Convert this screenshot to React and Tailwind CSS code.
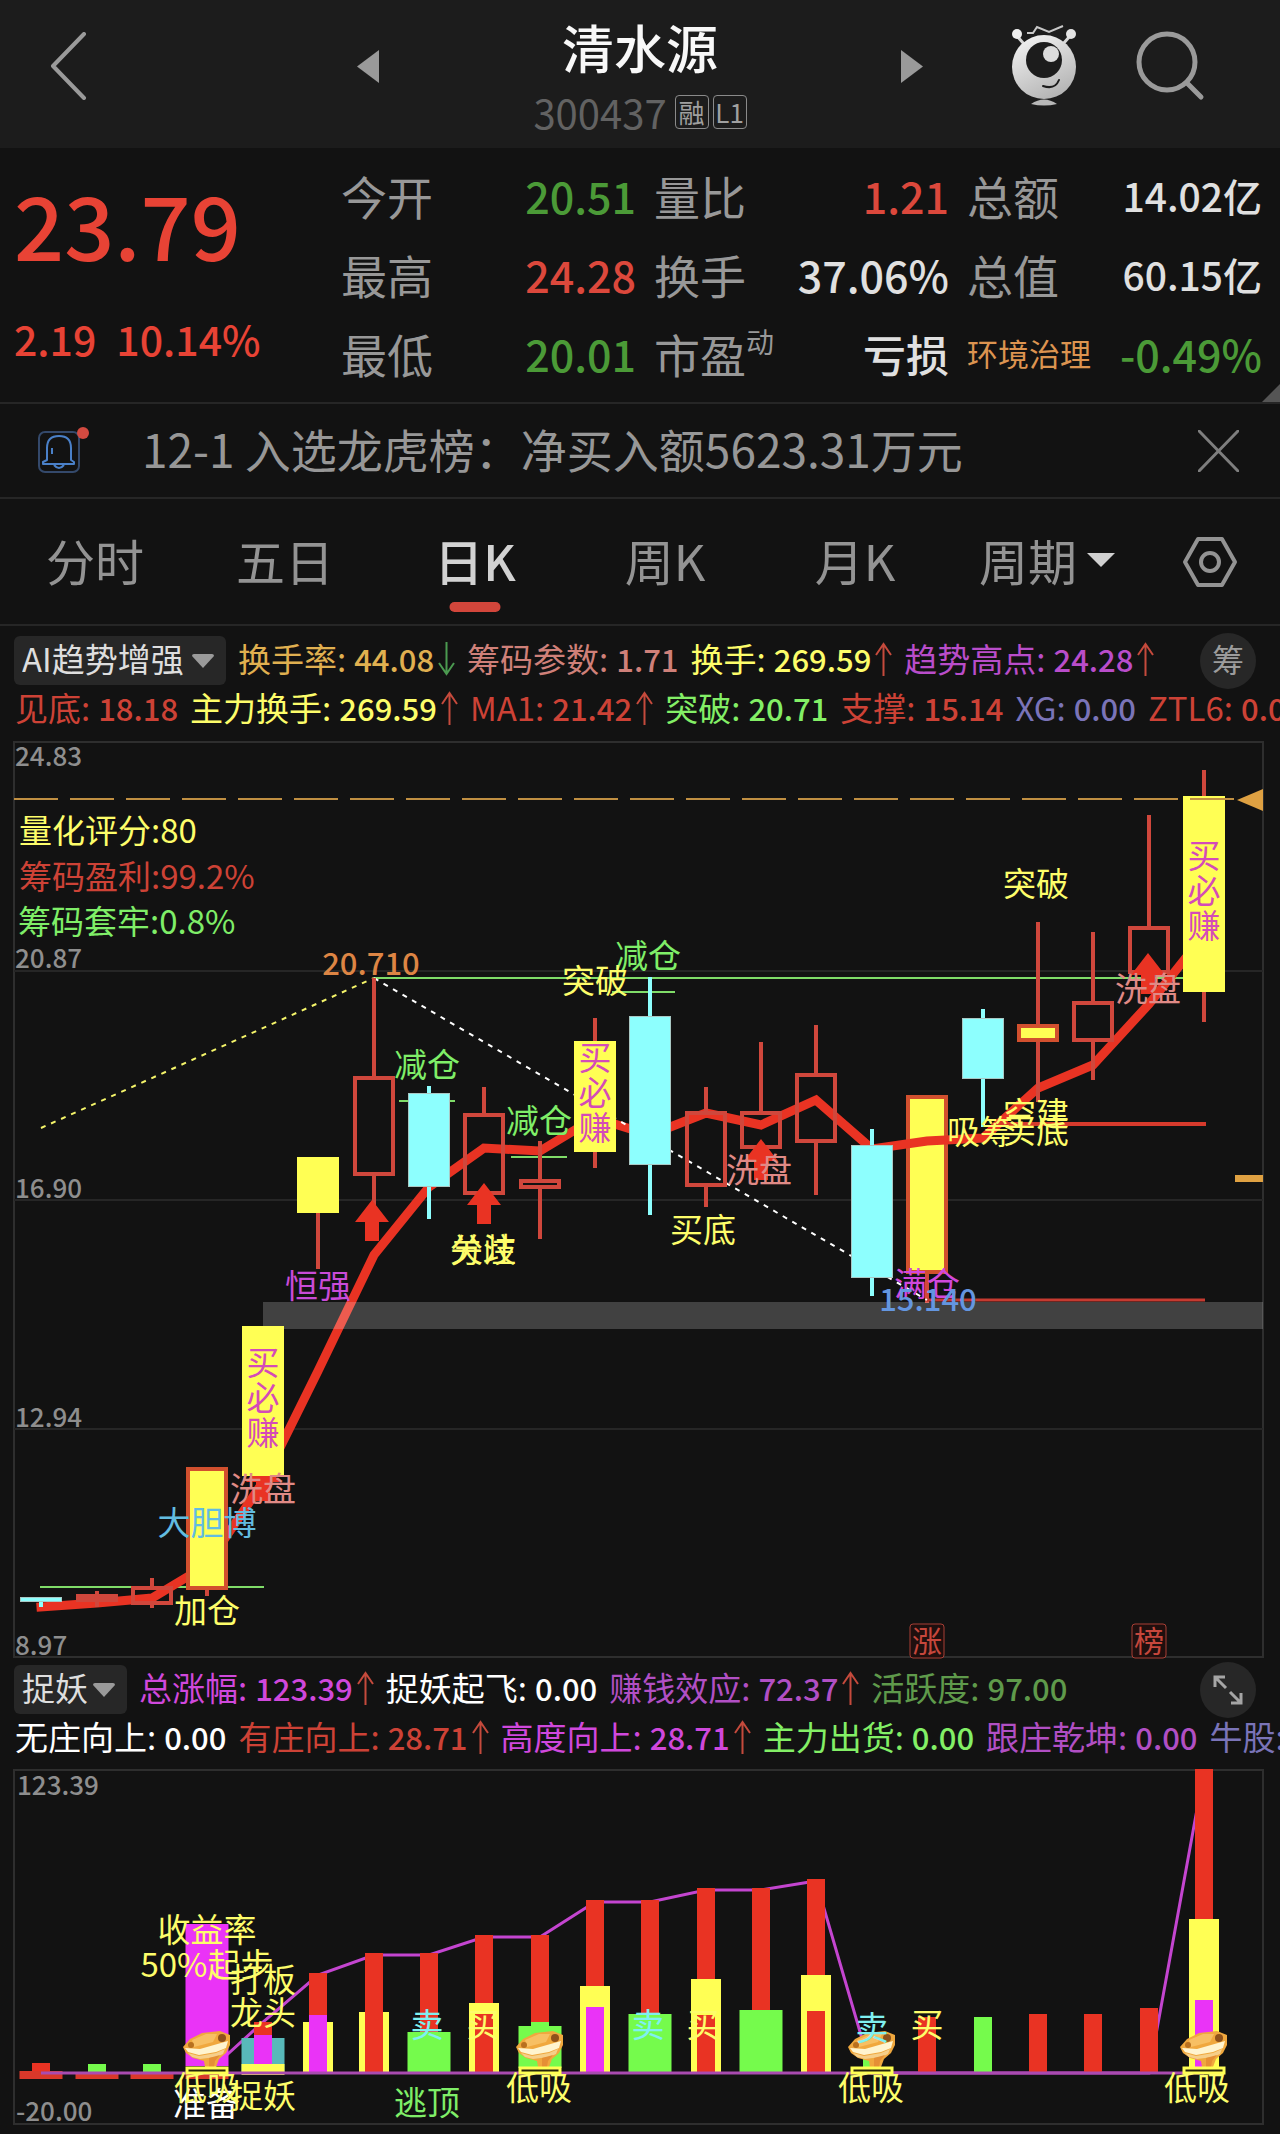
import React, { useState } from "react";

const QUOTES = [
  { label: "今开", value: "20.51", color: "text-[#4b9a37]" },
  { label: "量比", value: "1.21", color: "text-[#dc483c]" },
  { label: "总额", value: "14.02亿", color: "text-[#e0e0e0]", small: true },
  { label: "最高", value: "24.28", color: "text-[#dc483c]" },
  { label: "换手", value: "37.06%", color: "text-[#e0e0e0]" },
  { label: "总值", value: "60.15亿", color: "text-[#e0e0e0]", small: true },
  { label: "最低", value: "20.01", color: "text-[#4b9a37]" },
  { label: "市盈", sup: "动", value: "亏损", color: "text-[#e0e0e0]" },
  { label: "环境治理", sector: true, value: "-0.49%", color: "text-[#4b9a37]" },
];

const TABS = ["分时", "五日", "日K", "周K", "月K"];

const TREND_ROW_1 = [
  { name: "换手率", value: "44.08", dir: "down", color: "text-[#e0b050]" },
  { name: "筹码参数", value: "1.71", color: "text-[#cf8079]" },
  { name: "换手", value: "269.59", dir: "up", color: "text-[#fdfd6a]" },
  { name: "趋势高点", value: "24.28", dir: "up", color: "text-[#b94dca]" },
];

const TREND_ROW_2 = [
  { name: "见底", value: "18.18", color: "text-[#cd4236]" },
  { name: "主力换手", value: "269.59", dir: "up", color: "text-[#fdfd6a]" },
  { name: "MA1", value: "21.42", dir: "up", color: "text-[#cd4236]" },
  { name: "突破", value: "20.71", color: "text-[#83ef66]" },
  { name: "支撑", value: "15.14", color: "text-[#cd4236]" },
  { name: "XG", value: "0.00", color: "text-[#7a74b8]" },
  { name: "ZTL6", value: "0.00", color: "text-[#cd4236]" },
];

const CATCH_ROW_1 = [
  { name: "总涨幅", value: "123.39", dir: "up", color: "text-[#d048dc]" },
  { name: "捉妖起飞", value: "0.00", color: "text-white" },
  { name: "赚钱效应", value: "72.37", dir: "up", color: "text-[#b14fc4]" },
  { name: "活跃度", value: "97.00", color: "text-[#5f9a4b]" },
];

const CATCH_ROW_2 = [
  { name: "无庄向上", value: "0.00", color: "text-white" },
  { name: "有庄向上", value: "28.71", dir: "up", color: "text-[#cd4236]" },
  { name: "高度向上", value: "28.71", dir: "up", color: "text-[#d048dc]" },
  { name: "主力出货", value: "0.00", color: "text-[#83ef66]" },
  { name: "跟庄乾坤", value: "0.00", color: "text-[#b14fc4]" },
  { name: "牛股", value: "0.00", color: "text-[#7a74b8]" },
];

// x of the centre of the candle for day i
const dayX = (i) => Math.round(41.4 + i * 55.36);

// [day, type, high, bodyTop, bodyBottom, low] in chart coordinates
const CANDLES = [
  [0, "fall", 1597, 1597, 1602, 1607],
  [1, "rise", 1591, 1594, 1602, 1607],
  [2, "rise", 1578, 1586, 1605, 1608],
  [3, "limit", 1467, 1467, 1590, 1596],
  [4, "signal", 1326, 1326, 1476, 1476],
  [5, "signal", 1157, 1157, 1213, 1269],
  [6, "rise", 978, 1076, 1176, 1225],
  [7, "fall", 1086, 1093, 1187, 1219],
  [8, "rise", 1087, 1113, 1195, 1215],
  [9, "rise", 1141, 1179, 1189, 1239],
  [10, "signal", 1018, 1041, 1152, 1168],
  [11, "fall", 977, 1016, 1165, 1215],
  [12, "rise", 1087, 1111, 1187, 1207],
  [13, "rise", 1042, 1111, 1149, 1160],
  [14, "rise", 1025, 1073, 1143, 1195],
  [15, "fall", 1129, 1145, 1278, 1296],
  [17, "fall", 1009, 1018, 1079, 1127],
  [18, "limit", 922, 1024, 1042, 1102],
  [19, "rise", 932, 1001, 1042, 1080],
  [20, "rise", 815, 926, 974, 985],
  [21, "signal", 770, 796, 992, 1022],
];

const MA = [
  1607, 1603, 1598, 1565, 1482, 1371, 1255, 1187, 1148, 1151, 1118, 1135, 1113,
  1125, 1100, 1149, 1141, 1138, 1088, 1065, 1004, 935,
];

const YELLOW = "#fdfd6a";
const GREEN = "#7fee68";
const SALMON = "#e08a86";

const MARKS = [
  [427, 1065, "减仓", GREEN],
  [539, 1121, "减仓", GREEN],
  [648, 956, "减仓", GREEN],
  [595, 981, "突破", YELLOW],
  [1036, 884, "突破", YELLOW],
  [759, 1170, "洗盘", SALMON],
  [1148, 989, "洗盘", SALMON],
  [263, 1489, "洗盘", SALMON],
  [207, 1523, "大胆博", "#62bce0"],
  [207, 1611, "加仓", YELLOW],
  [318, 1286, "恒强", "#c94bd8"],
  [483, 1250, "分歧", YELLOW],
  [483, 1250, "关注", YELLOW],
  [703, 1230, "买底", YELLOW],
  [927, 1284, "满仓", "#d048dc"],
  [980, 1132, "吸筹", YELLOW],
  [1036, 1114, "空建", YELLOW],
  [1036, 1131, "买底", YELLOW],
];

const RED = "#e93323";
const PURE_YELLOW = "#ffff54";
const LIME = "#75fb4c";
const MAGENTA = "#ea33f7";

// [day, width, top, bottom, color]
const BARS = [
  [0, 18, 2063, 2073, RED],
  [0, 43, 2071, 2079, "#d9382a"],
  [1, 18, 2064, 2073, LIME],
  [1, 43, 2072, 2079, "#d9382a"],
  [2, 18, 2064, 2073, LIME],
  [2, 43, 2072, 2079, "#d9382a"],
  [3, 43, 1924, 2066, MAGENTA],
  [3, 43, 2072, 2079, "#d9382a"],
  [4, 43, 2038, 2073, "#58b9ba"],
  [4, 18, 2022, 2035, RED],
  [4, 18, 2035, 2064, MAGENTA],
  [4, 43, 2064, 2075, PURE_YELLOW],
  [5, 30, 2022, 2074, PURE_YELLOW],
  [5, 18, 1973, 2015, RED],
  [5, 18, 2015, 2074, MAGENTA],
  [6, 30, 2012, 2074, PURE_YELLOW],
  [6, 18, 1953, 2074, RED],
  [7, 18, 1953, 2032, RED],
  [7, 43, 2032, 2074, LIME],
  [8, 18, 1935, 2003, RED],
  [8, 30, 2003, 2074, PURE_YELLOW],
  [8, 18, 2014, 2074, RED],
  [9, 18, 1935, 2022, RED],
  [9, 18, 2022, 2074, LIME],
  [9, 43, 2026, 2068, LIME],
  [10, 18, 1900, 1986, RED],
  [10, 30, 1986, 2074, PURE_YELLOW],
  [10, 18, 2007, 2074, MAGENTA],
  [11, 18, 1900, 2014, RED],
  [11, 43, 2014, 2074, LIME],
  [12, 18, 1888, 1979, RED],
  [12, 30, 1979, 2074, PURE_YELLOW],
  [12, 18, 2015, 2074, RED],
  [13, 18, 1888, 2010, RED],
  [13, 43, 2010, 2074, LIME],
  [14, 18, 1879, 1975, RED],
  [14, 30, 1975, 2074, PURE_YELLOW],
  [14, 18, 2011, 2074, RED],
  [15, 18, 2055, 2074, LIME],
  [16, 18, 2017, 2074, RED],
  [17, 18, 2017, 2074, LIME],
  [18, 18, 2014, 2074, RED],
  [19, 18, 2014, 2074, RED],
  [20, 18, 2008, 2074, RED],
  [21, 18, 1769, 1919, RED],
  [21, 30, 1919, 2074, PURE_YELLOW],
  [21, 18, 2000, 2074, MAGENTA],
];

const GAIN = [
  2073, 2022, 1975, 1955, 1955, 1937, 1937, 1902, 1902, 1890, 1890, 1881, 2073,
  2073, 2073, 2073, 2073, 2073, 1771,
];

const CATCH_MARKS = [
  [207, 1930, "收益率", YELLOW],
  [207, 1965, "50%起步", YELLOW],
  [263, 1980, "打板", YELLOW],
  [263, 2013, "龙头", YELLOW],
  [206, 2104, "准备", "#ffffff"],
  [207, 2088, "低吸", YELLOW],
  [263, 2096, "捉妖", YELLOW],
  [427, 2025, "卖", "#7ff0f0"],
  [483, 2025, "买", YELLOW],
  [427, 2103, "逃顶", GREEN],
  [539, 2088, "低吸", YELLOW],
  [648, 2025, "卖", "#7ff0f0"],
  [703, 2025, "买", YELLOW],
  [872, 2028, "卖", "#7ff0f0"],
  [927, 2025, "买", YELLOW],
  [871, 2088, "低吸", YELLOW],
  [1197, 2088, "低吸", YELLOW],
];

const Mark = ({ x, y, color, children }) => (
  <text x={x} y={y + 12} fill={color} textAnchor="middle" fontSize="33">
    {children}
  </text>
);

const AxisLabel = ({ x = 15, y, children }) => (
  <text x={x} y={y + 10} fill="#8e8e8e" fontSize="26" fontWeight="500">
    {children}
  </text>
);

const Candle = ({ day, type, high, top, bottom, low }) => {
  const x = dayX(day);
  const wick = type === "fall" ? "#8dfffe" : "#d0473c";
  const styles = {
    fall: { fill: "#8dfffe", stroke: "#a9c8c4", strokeWidth: 1 },
    rise: { fill: "none", stroke: "#d0473c", strokeWidth: 4 },
    limit: { fill: "#ffff54", stroke: "#d2502e", strokeWidth: 4 },
    signal: { fill: "#ffff54", stroke: "none", strokeWidth: 0 },
  };
  const s = styles[type];
  const inset = s.strokeWidth / 2;
  return (
    <g>
      <path
        d={`M${x} ${high}V${top}M${x} ${bottom}V${low}`}
        stroke={wick}
        strokeWidth="4"
      />
      <rect
        x={x - 21 + inset}
        y={top + inset}
        width={42 - s.strokeWidth}
        height={bottom - top - s.strokeWidth}
        {...s}
      />
    </g>
  );
};

const BuyArrow = ({ x, y }) => (
  <path
    d={`M${x} ${y}L${x + 17} ${y + 22}H${x + 7}V${y + 41}H${x - 7}V${y + 22}H${x - 17}Z`}
    fill="#e93323"
  />
);

const BuyColumn = ({ x, y }) =>
  ["买", "必", "赚"].map((c, i) => (
    <Mark key={c} x={x} y={y + i * 35} color="#d44bb8">
      {c}
    </Mark>
  ));

const DayTag = ({ x, children }) => (
  <g>
    <rect
      x={x - 17}
      y="1624"
      width="34"
      height="34"
      rx="3"
      fill="#1f0f0e"
      stroke="#a83f35"
      strokeWidth="1"
    />
    <text x={x} y="1652" fill="#c6473c" textAnchor="middle" fontSize="30">
      {children}
    </text>
  </g>
);

const Ingot = ({ day }) => (
  <g transform={`translate(${dayX(day) - 25} 2031)`}>
    <path
      d="M1 16L8 8L20 2L38 0L48 4V14L44 22L37 28L34 36H23L22 30L11 27L4 22Z"
      fill="#f0a83e"
    />
    <path d="M10 9L24 3L35 3L31 11L12 16Z" fill="#f7bf63" />
    <path d="M3 17L18 18L46 10L44 17L34 21L17 24L6 21Z" fill="#fff4cf" />
    <path d="M6 22L17 25L34 22L43 18L41 23L34 26L18 28L10 26Z" fill="#f6cf8a" />
    <path d="M27 27L38 24L33 30L32 36H27Z" fill="#e58f35" />
    <circle cx="40" cy="7" r="4" fill="#8f521b" />
    <circle cx="9" cy="14" r="3" fill="#b8701f" />
    <rect
      x="5"
      y="37"
      width="40"
      height="5"
      fill="#26230c"
      stroke="#ffff54"
      strokeWidth="3"
    />
  </g>
);

const KlineChart = () => (
  <svg
    viewBox="0 734 1280 931"
    className="block w-full"
    role="img"
    aria-label="日K线图"
  >
    <rect
      x="14"
      y="742"
      width="1249"
      height="915"
      fill="none"
      stroke="#2e2e2e"
      strokeWidth="2"
    />
    <path
      d="M14 971H1263M14 1200H1263M14 1429H1263"
      stroke="#262626"
      strokeWidth="2"
    />
    <AxisLabel y={756}>24.83</AxisLabel>
    <AxisLabel y={958}>20.87</AxisLabel>
    <AxisLabel y={1188}>16.90</AxisLabel>
    <AxisLabel y={1417}>12.94</AxisLabel>
    <AxisLabel y={1645}>8.97</AxisLabel>

    <g fontSize="33">
      <text x="19" y="843" fill="#fdfd6a">
        量化评分:80
      </text>
      <text x="19" y="889" fill="#cd4236">
        筹码盈利:99.2%
      </text>
      <text x="18" y="934" fill="#7fee68">
        筹码套牢:0.8%
      </text>
    </g>

    <path
      d="M374 978H1190M40 1587H264M399 1101H455M511 1157H567M612 992H675"
      stroke="#7fdc68"
      strokeWidth="2"
    />
    <Candle day={16} type="limit" high={1095} top={1095} bottom={1274} low={1303} />
    <polyline
      points={MA.map((y, i) => `${dayX(i)},${y}`).join(" ")}
      fill="none"
      stroke="#e93323"
      strokeWidth="9"
      strokeLinecap="square"
    />
    <path d="M995 1124H1206" stroke="#d63a2c" strokeWidth="4" />
    <path d="M927 1300H1205" stroke="#c63a30" strokeWidth="3" />
    <path
      d="M41 1128L374 978"
      stroke="#f5f56a"
      strokeWidth="2"
      strokeDasharray="5 6"
    />
    <path
      d="M374 978L927 1300"
      stroke="#ffffff"
      strokeWidth="2"
      strokeDasharray="5 6"
    />
    <rect x="263" y="1302" width="1000" height="27" fill="#ffffff" opacity="0.2" />
    <BuyArrow x={263} y={1460} />
    {CANDLES.map(([day, type, high, top, bottom, low]) => (
      <Candle
        key={day}
        day={day}
        type={type}
        high={high}
        top={top}
        bottom={bottom}
        low={low}
      />
    ))}
    <BuyArrow x={372} y={1200} />
    <BuyArrow x={484} y={1183} />
    <BuyArrow x={761} y={1139} />
    <BuyArrow x={1148} y={953} />

    <path
      d="M14 799H1263"
      stroke="#c08f42"
      strokeWidth="2"
      strokeDasharray="44 12"
    />
    <path d="M1237 800L1263 789V811Z" fill="#dfa142" />
    <rect x="1235" y="1175" width="28" height="7" fill="#dfa142" />

    {MARKS.map(([x, y, text, color]) => (
      <Mark key={`${x}-${y}-${text}`} x={x} y={y} color={color}>
        {text}
      </Mark>
    ))}
    <BuyColumn x={263} y={1363} />
    <BuyColumn x={595} y={1058} />
    <BuyColumn x={1204} y={856} />
    <g textAnchor="middle" fontSize="31" fontWeight="500">
      <text x="371" y="975" fill="#dd8544">
        20.710
      </text>
      <text x="928" y="1311" fill="#6496e0">
        15.140
      </text>
    </g>
    <DayTag x={927}>涨</DayTag>
    <DayTag x={1149}>榜</DayTag>
  </svg>
);

const CatchChart = () => (
  <svg
    viewBox="0 1763 1280 371"
    className="block w-full"
    role="img"
    aria-label="捉妖指标图"
  >
    <rect
      x="14"
      y="1770"
      width="1249"
      height="354"
      fill="none"
      stroke="#2e2e2e"
      strokeWidth="2"
    />
    <AxisLabel x={17} y={1785}>
      123.39
    </AxisLabel>
    <AxisLabel x={16} y={2111}>
      -20.00
    </AxisLabel>
    <polyline
      points={GAIN.map((y, i) => `${dayX(i + 3)},${y}`).join(" ")}
      fill="none"
      stroke="#c445d0"
      strokeWidth="3"
    />
    {BARS.map(([day, width, top, bottom, color], i) => (
      <rect
        key={i}
        x={dayX(day) - width / 2}
        y={top}
        width={width}
        height={bottom - top}
        fill={color}
      />
    ))}
    <path d="M41 2073H1204" stroke="#a94bb0" strokeWidth="3" />
    <Ingot day={3} />
    <Ingot day={9} />
    <Ingot day={15} />
    <Ingot day={21} />
    {CATCH_MARKS.map(([x, y, text, color]) => (
      <Mark key={`${x}-${y}`} x={x} y={y} color={color}>
        {text}
      </Mark>
    ))}
  </svg>
);

const TrendArrow = ({ dir }) => (
  <svg
    width="17"
    height="36"
    viewBox="0 0 17 36"
    fill="none"
    strokeWidth="2"
    className={
      dir === "up"
        ? "ml-1 shrink-0 stroke-[#c54a3c]"
        : "ml-1 shrink-0 rotate-180 stroke-[#4b9a50]"
    }
  >
    <path d="M8.500 35V3M1 14L8.500 3L16 14" />
  </svg>
);

const Indicator = ({ item }) => (
  <span className={`flex h-[49px] shrink-0 items-center pb-1 ${item.color}`}>
    <span className="text-[33px]">{item.name}:</span>
    <span className="ml-2 text-[31px] font-medium">{item.value}</span>
    {item.dir && <TrendArrow dir={item.dir} />}
  </span>
);

const IndicatorPicker = ({ label, options, width }) => {
  const [value, setValue] = useState(options[0]);
  return (
    <span
      className={`flex h-[49px] shrink-0 items-center rounded-md bg-[#272727] pr-3 pl-2 ${width}`}
    >
      <select
        aria-label={label}
        value={value}
        onChange={(e) => setValue(e.target.value)}
        className="min-w-0 flex-1 appearance-none bg-transparent pb-1 text-[33px] leading-[45px] text-[#dedede] outline-none"
      >
        {options.map((o) => (
          <option key={o}>{o}</option>
        ))}
      </select>
      <svg width="22" height="14" viewBox="0 0 22 14" className="shrink-0">
        <path d="M0 2Q0 0 2 0H20Q22 0 22 2L11 14Z" fill="#9a9a9a" />
      </svg>
    </span>
  );
};

const Header = () => (
  <header className="grid h-[148px] grid-cols-[1fr_566px_1fr] bg-[#1c1c1c]">
    <div className="flex items-center pl-[50px]">
      <button type="button" aria-label="返回" className="-mt-4">
        <svg width="37" height="68" viewBox="0 0 37 68" fill="none">
          <path
            d="M34 2L3 34L34 66"
            stroke="#9a9a9a"
            strokeWidth="4"
            strokeLinecap="round"
            strokeLinejoin="round"
          />
        </svg>
      </button>
    </div>
    <div className="flex justify-between">
      <button type="button" aria-label="上一只" className="-mt-4">
        <svg width="22" height="33" viewBox="0 0 22 33">
          <path d="M0 16.500L22 0V33Z" fill="#9a9a9a" />
        </svg>
      </button>
      <div className="flex flex-col items-center pt-3">
        <h1 className="text-[52px] leading-[70px] font-medium text-[#f8f8f8]">
          清水源
        </h1>
        <p className="flex items-center gap-2 text-[40px] leading-[60px] text-[#626262]">
          300437
          <span className="flex gap-1 text-[26px] leading-8 text-[#a0a0a0]">
            <span className="flex h-[34px] w-[34px] items-center justify-center rounded border border-[#8a8a8a]">
              融
            </span>
            <span className="flex h-[34px] w-[34px] items-center justify-center rounded border border-[#8a8a8a]">
              L1
            </span>
          </span>
        </p>
      </div>
      <button type="button" aria-label="下一只" className="-mt-4">
        <svg width="22" height="33" viewBox="0 0 22 33">
          <path d="M22 16.500L0 0V33Z" fill="#9a9a9a" />
        </svg>
      </button>
    </div>
    <div className="flex items-center justify-end gap-[58px] pr-[75px]">
      <button type="button" aria-label="助手" className="-mt-4">
        <svg width="68" height="84" viewBox="0 0 68 84" fill="none">
          <defs>
            <linearGradient id="robot" x1="0.2" y1="0" x2="0.7" y2="1">
              <stop offset="0" stopColor="#f2f2f2" />
              <stop offset="1" stopColor="#b2b2b2" />
            </linearGradient>
          </defs>
          <path
            d="M7 12L14 20M60 12L53 20"
            stroke="#d8d8d8"
            strokeWidth="3"
          />
          <circle cx="7" cy="10" r="5" fill="#f0f0f0" />
          <circle cx="61" cy="10" r="5" fill="#e4e4e4" />
          <path d="M17 9H23L27 3L39 8L53 2" stroke="#c8c8c8" strokeWidth="2" />
          <circle cx="34" cy="43" r="32" fill="url(#robot)" />
          <circle cx="34" cy="36" r="18" fill="#1c1c1c" />
          <circle cx="41" cy="30" r="8" fill="#dcdcdc" />
          <path
            d="M33 62Q45 66 49 56"
            stroke="#1c1c1c"
            strokeWidth="2"
            strokeLinecap="round"
          />
          <path d="M21 80Q34 71 47 80Q34 83 21 80Z" fill="#b8b8b8" />
        </svg>
      </button>
      <button type="button" aria-label="搜索" className="-mt-4">
        <svg width="69" height="70" viewBox="0 0 69 70" fill="none">
          <g stroke="#9a9a9a" strokeWidth="5">
            <circle cx="31" cy="31" r="28" />
            <path d="M51 52L65 66" strokeLinecap="round" />
          </g>
        </svg>
      </button>
    </div>
  </header>
);

const QuotePanel = () => (
  <section className="relative flex h-[256px] border-b-2 border-[#262626] pr-[18px]">
    <div className="w-[341px] shrink-0 pt-[20px] pl-[14px] text-[#e84335]">
      <p className="text-[88px] leading-[110px] font-medium">23.79</p>
      <p className="flex gap-[20px] pt-[30px] text-[41px] leading-[60px] font-medium">
        <span>2.19</span>
        <span>10.14%</span>
      </p>
    </div>
    <dl className="grid flex-1 auto-rows-[79px] grid-cols-3 gap-x-[18px] pt-[8px]">
      {QUOTES.map((q) => (
        <div
          key={q.label}
          className="flex items-center justify-between whitespace-nowrap"
        >
          <dt
            className={
              q.sector ? "text-[31px] text-[#dc9450]" : "text-[46px] text-[#989898]"
            }
          >
            {q.label}
            {q.sup && <sup className="-top-5 text-[28px]">{q.sup}</sup>}
          </dt>
          <dd
            className={`font-medium ${q.small ? "text-[39px]" : "text-[43px]"} ${q.color}`}
          >
            {q.value}
          </dd>
        </div>
      ))}
    </dl>
    <svg
      width="18"
      height="18"
      viewBox="0 0 18 18"
      className="absolute right-0 bottom-0"
    >
      <path d="M18 0V18H0Z" fill="#555555" />
    </svg>
  </section>
);

const NewsBar = () => (
  <section className="flex h-[95px] items-center border-b-2 border-[#262626] pr-[41px] pl-[37px]">
    <svg width="54" height="48" viewBox="0 0 54 48" fill="none">
      <rect x="2" y="5" width="40" height="40" rx="6" stroke="#34496b" strokeWidth="2" />
      <path
        d="M10 33V21Q10 9 22 9Q34 9 34 21V33L37 35V37H6V35Z"
        stroke="#4a80c8"
        strokeWidth="2"
        strokeLinejoin="round"
      />
      <path d="M17 38Q22 44 27 38M15 21V27" stroke="#4a80c8" strokeWidth="2" />
      <circle cx="46" cy="6" r="6" fill="#d24a40" />
    </svg>
    <a href="#news" className="ml-[51px] flex-1 pb-1 text-[46px] text-[#979797]">
      12-1 入选龙虎榜：净买入额5623.31万元
    </a>
    <button type="button" aria-label="关闭">
      <svg width="41" height="42" viewBox="0 0 41 42" fill="none">
        <path
          d="M1 1L40 41M40 1L1 41"
          stroke="#7e7e7e"
          strokeWidth="3"
          strokeLinecap="round"
        />
      </svg>
    </button>
  </section>
);

const PeriodTabs = () => {
  const [active, setActive] = useState("日K");
  return (
    <nav className="grid h-[127px] grid-cols-[repeat(6,190fr)_140fr] border-b-2 border-[#262626] text-[49px] text-[#939393]">
      {TABS.map((tab) => (
        <button
          key={tab}
          type="button"
          onClick={() => setActive(tab)}
          className={
            tab === active
              ? "relative pb-1 font-medium text-[#d2d2d2]"
              : "relative pb-1 font-normal"
          }
        >
          {tab}
          {tab === active && (
            <span className="absolute bottom-3 left-1/2 h-[10px] w-[51px] -translate-x-1/2 rounded-full bg-[#d2463b]" />
          )}
        </button>
      ))}
      <button
        type="button"
        aria-haspopup="menu"
        className="flex items-center justify-center gap-[10px] pb-1 pl-1"
      >
        周期
        <svg width="28" height="14" viewBox="0 0 28 14">
          <path d="M0 0H28L14 14Z" fill="#d0d0d0" />
        </svg>
      </button>
      <button
        type="button"
        aria-label="设置"
        className="flex items-center justify-center"
      >
        <svg width="56" height="52" viewBox="0 0 56 52" fill="none">
          <g stroke="#939393" strokeWidth="4" strokeLinejoin="round">
            <path d="M16 3H40L53 26L40 49H16L3 26Z" />
            <circle cx="28" cy="26" r="9" />
          </g>
        </svg>
      </button>
    </nav>
  );
};

const IndicatorRow = ({ items }) => (
  <div className="flex h-[49px] items-center gap-3 pl-[15px] leading-[45px] whitespace-nowrap">
    {items.map((item) => (
      <Indicator key={item.name} item={item} />
    ))}
  </div>
);

const App = () => (
  <main className="min-h-screen w-full overflow-hidden bg-[#121212] font-['Noto_Sans_CJK_SC',sans-serif]">
    <Header />
    <QuotePanel />
    <NewsBar />
    <PeriodTabs />
    <section>
      <div className="flex h-[59px] items-center gap-3 pt-[10px] pr-[24px] pl-[14px] leading-[45px] whitespace-nowrap">
        <IndicatorPicker
          label="主图指标"
          options={["AI趋势增强", "均线", "BOLL"]}
          width="w-[212px]"
        />
        {TREND_ROW_1.map((item) => (
          <Indicator key={item.name} item={item} />
        ))}
        <button
          type="button"
          aria-label="筹码分布"
          className="ml-auto flex size-[56px] shrink-0 items-center justify-center rounded-full bg-[#272727] pb-1 text-[32px] text-[#9c9c9c]"
        >
          筹
        </button>
      </div>
      <IndicatorRow items={TREND_ROW_2} />
      <KlineChart />
    </section>
    <section>
      <div className="flex h-[49px] items-center gap-3 pr-[24px] pl-[14px] leading-[45px] whitespace-nowrap">
        <IndicatorPicker
          label="副图指标"
          options={["捉妖", "量", "KDJ"]}
          width="w-[113px]"
        />
        {CATCH_ROW_1.map((item) => (
          <Indicator key={item.name} item={item} />
        ))}
        <button
          type="button"
          aria-label="全屏"
          className="ml-auto flex size-[56px] shrink-0 items-center justify-center rounded-full bg-[#272727]"
        >
          <svg width="30" height="30" viewBox="0 0 30 30" fill="none">
            <path
              d="M13 13L2 2M2 12V2H12M17 17L28 28M28 18V28H18"
              stroke="#a5a5a5"
              strokeWidth="3"
            />
          </svg>
        </button>
      </div>
      <IndicatorRow items={CATCH_ROW_2} />
      <CatchChart />
    </section>
  </main>
);

export default App;
